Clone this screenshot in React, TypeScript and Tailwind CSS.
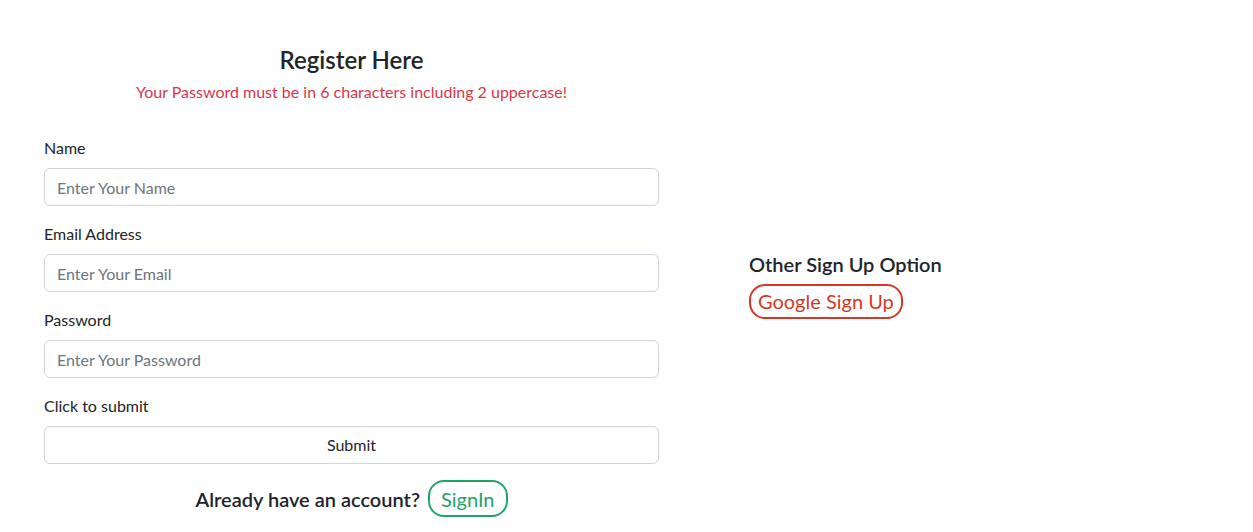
import React from "react";

const Field = ({ label, placeholder, type }: { label: string; placeholder: string; type: string }) => {
  return (
    <div className="flex flex-col mb-4">
      <label className="text-base leading-6 mb-2">{label}</label>
      <input
        type={type}
        placeholder={placeholder}
        className="h-[38px] w-full rounded-md border border-[#ced4da] px-3 text-base text-[#212529] placeholder:text-[#6c757d] outline-none"
      />
    </div>
  );
};

const App = () => {
  return (
    <div className="w-full min-h-[532px] bg-white font-['Lato',sans-serif] text-[#212529]">
      <div className="flex pl-[44px] pt-[45px]">
        <form className="w-[615px] flex flex-col" onSubmit={(e) => e.preventDefault()}>
          <h4 className="text-center text-2xl leading-[29px] font-semibold">Register Here</h4>
          <p className="text-center text-base leading-6 text-[#dc3545] mt-[6px] mb-8">
            Your Password must be in 6 characters including 2 uppercase!
          </p>
          <Field label="Name" placeholder="Enter Your Name" type="text" />
          <Field label="Email Address" placeholder="Enter Your Email" type="email" />
          <Field label="Password" placeholder="Enter Your Password" type="password" />
          <div className="flex flex-col mb-4">
            <label className="text-base leading-6 mb-2">Click to submit</label>
            <button
              type="submit"
              className="h-[38px] w-full rounded-md border border-[#ced4da] bg-white text-base text-[#212529]"
            >
              Submit
            </button>
          </div>
          <div className="flex items-center justify-center gap-2">
            <span className="text-xl font-semibold">Already have an account?</span>
            <button
              type="button"
              className="h-[37px] rounded-2xl border-2 border-[#1fa36b] px-[11px] text-xl text-[#1fa36b] bg-white"
            >
              SignIn
            </button>
          </div>
        </form>
        <div className="ml-[90px] mt-2 flex flex-col items-start self-center">
          <h5 className="text-xl leading-6 font-semibold">Other Sign Up Option</h5>
          <button
            type="button"
            className="mt-2 h-[35px] rounded-2xl border-2 border-[#d03a25] px-[7px] text-xl text-[#d03a25] bg-white"
          >
            Google Sign Up
          </button>
        </div>
      </div>
    </div>
  );
};

export default App;
